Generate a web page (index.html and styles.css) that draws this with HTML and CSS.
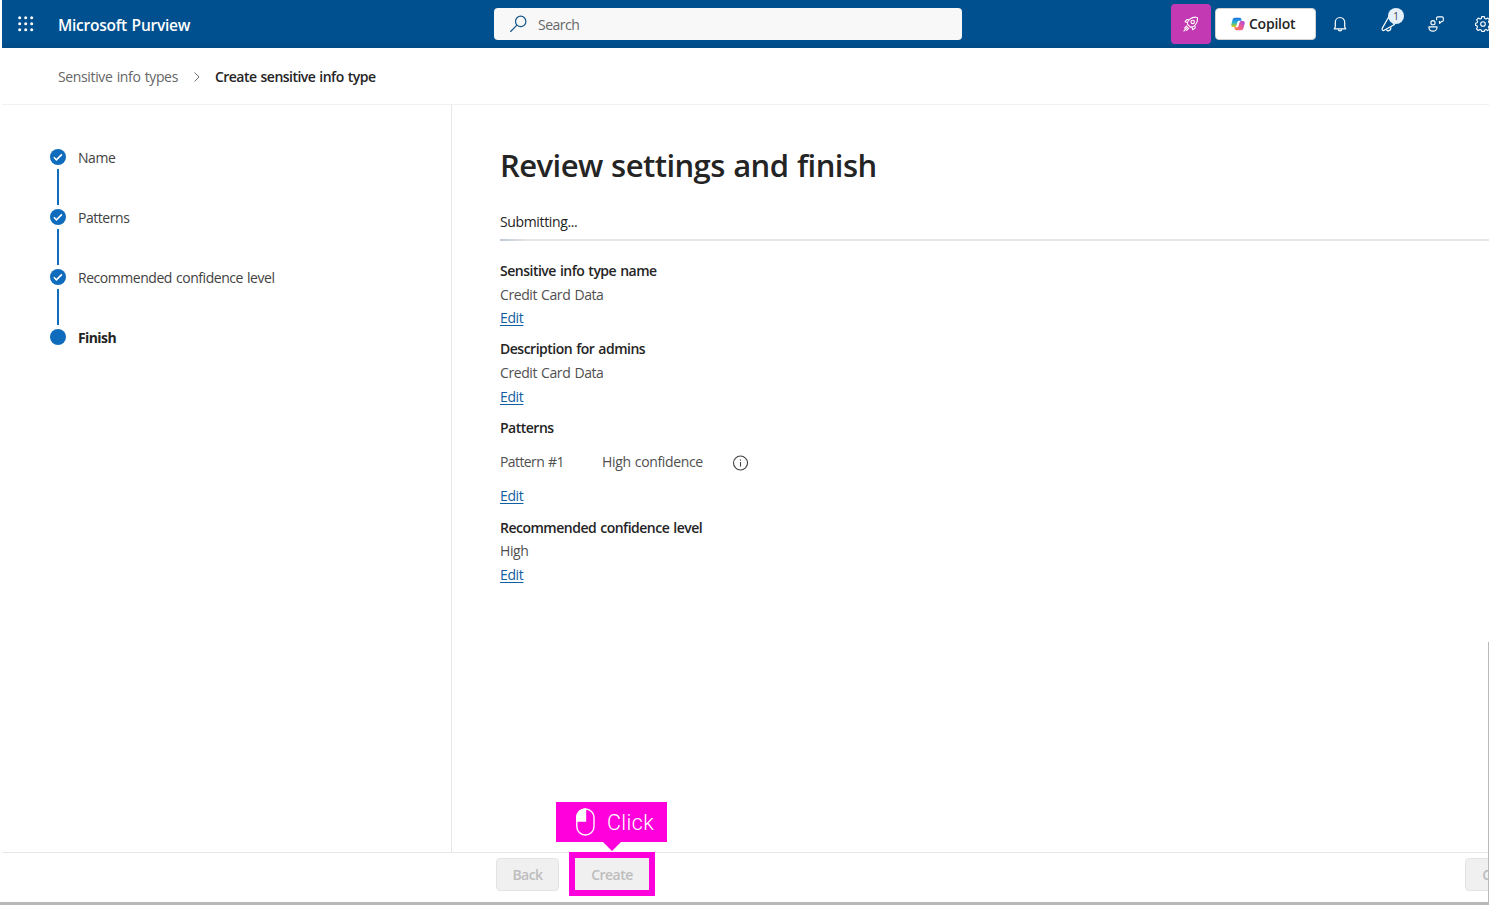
FILE: index.html
```html
<!DOCTYPE html>
<html lang="en">
<head>
<meta charset="utf-8">
<title>Create sensitive info type - Microsoft Purview</title>
<link rel="stylesheet" href="styles.css">
</head>
<body>
<div class="app">
  <header class="topbar">
    <svg class="waffle" width="16" height="16" viewBox="0 0 16 16" fill="#fff"><circle cx="1.700" cy="1.700" r="1.500"/><circle cx="7.700" cy="1.700" r="1.500"/><circle cx="13.700" cy="1.700" r="1.500"/><circle cx="1.700" cy="7.700" r="1.500"/><circle cx="7.700" cy="7.700" r="1.500"/><circle cx="13.700" cy="7.700" r="1.500"/><circle cx="1.700" cy="13.700" r="1.500"/><circle cx="7.700" cy="13.700" r="1.500"/><circle cx="13.700" cy="13.700" r="1.500"/></svg>
    <div class="brand"><span class="brand-text">Microsoft Purview</span></div>
    <div class="search">
      <svg width="18" height="18" viewBox="0 0 18 18" fill="none" stroke="#0f548c" stroke-width="1.200"><circle cx="10.700" cy="6.400" r="5.200"/><path d="M6.900 10.200.4 16.800"/></svg>
      <span class="search-text">Search</span>
    </div>
    <div class="tools">
      <div class="rocket">
        <svg width="16" height="16" viewBox="0 0 16 16" fill="none" stroke="#fff" stroke-width="1.100" stroke-linejoin="round" stroke-linecap="round"><path d="M4.400 8.200C4.200 4.500 8 .9 13.200 1.100c.8 0 1.300.5 1.300 1.300.2 5.100-3.300 8.900-7.100 8.700z"/><circle cx="9.700" cy="5.900" r="1.700"/><path d="M5.700 3.800 3.800 3.500 2 5.800l2.400.8M11.900 9.800l.3 2.100-2.500 1.800-.7-2.600M3.700 10 1.500 12.200M5.800 12.200l-2.200 2.200M4.700 11.200.9 15"/></svg>
      </div>
      <div class="copilot">
        <svg width="14" height="14" viewBox="0 0 14 14">
          <defs>
            <linearGradient id="cool" x1="0" y1="0" x2="0" y2="1"><stop offset="0" stop-color="#1b6fe0"/><stop offset=".5" stop-color="#27b3d6"/><stop offset=".8" stop-color="#8acb4e"/><stop offset="1" stop-color="#f2c811"/></linearGradient>
            <linearGradient id="warm" x1="1" y1="0" x2="0" y2="1"><stop offset="0" stop-color="#a04be8"/><stop offset=".5" stop-color="#ef5a94"/><stop offset="1" stop-color="#ff8a3c"/></linearGradient>
          </defs>
          <path d="M4 .8h4.600c1 0 1.500.7 1.800 1.600l.4 1.300H8.300c-.9 0-1.400.5-1.700 1.300L5.400 8.800C5.100 9.700 4.600 10 3.800 10H2C.6 10 0 8.900.3 7.600L1.600 2.700C1.900 1.500 2.700.8 4 .8z" fill="url(#cool)"/>
          <path d="M10 13.200H5.400c-1 0-1.500-.7-1.800-1.600l-.4-1.300h2.500c.9 0 1.400-.5 1.700-1.300l1.200-3.800c.3-.9.800-1.200 1.600-1.200H12c1.400 0 2 1.100 1.700 2.400l-1.300 4.900c-.3 1.200-1.100 1.900-2.400 1.900z" fill="url(#warm)"/>
          <path d="M6.800 4.800h1.600L7.200 9.200H5.600z" fill="#fff"/>
        </svg>
        <span class="copilot-text">Copilot</span>
      </div>
      <svg class="bell" width="14" height="16" viewBox="0 0 14 16" fill="none" stroke="#fff" stroke-width="1.200" stroke-linejoin="round"><path d="M2.300 11V6.200a4.700 4.700 0 0 1 9.400 0V11l1 1.800H1.300z"/><path d="M5.300 13.200a1.700 1.700 0 0 0 3.400 0"/></svg>
      <div class="news">
        <svg width="16" height="16" viewBox="0 0 16 16" fill="none" stroke="#fff" stroke-width="1.200" stroke-linejoin="round"><path d="M7.500 1.200 13.500 8.500 3.200 14.300c-1.300.7-2.600-.6-2-1.900z"/><path d="M5.400 13.400c.6 2.300 4.600 1.800 4.500-2.200"/></svg>
        <span class="badge">1</span>
      </div>
      <svg class="feedback" width="16" height="16" viewBox="0 0 16 16" fill="none" stroke="#fff" stroke-width="1.100" stroke-linejoin="round"><circle cx="5" cy="6.700" r="2.100"/><path d="M.9 10.900h8.200c0 5.600-8.200 5.600-8.200 0z"/><path d="M8.600 4.200V2.100C8.600 1.400 9.100.9 9.800.9h4.300c.7 0 1.200.5 1.200 1.200v2.200c0 .8-.5 1.200-1.200 1.200h-.5l-2 1.900V5.500h-.8"/></svg>
      <svg class="gear" width="16" height="16" viewBox="0 0 16 16" fill="none" stroke="#fff" stroke-width="1.100" stroke-linejoin="round"><path d="M6.700.6h2.600l.5 2 1.200.5 1.800-1 1.700 1.700-1 1.800.5 1.200 1.400.4v2.200l-1.500.5-.5 1.200 1 1.800-1.700 1.700-1.800-1-1.200.5-.4 1.300H6.700l-.5-1.400-1.200-.5-1.800 1-1.700-1.700 1-1.800-.5-1.200-1.400-.4V7.200L2.100 6.800l.5-1.200-1-1.800 1.700-1.700 1.800 1 1.200-.5z"/><circle cx="8" cy="8" r="2.300"/></svg>
    </div>
  </header>

  <nav class="crumbs">
    <span class="crumb-link">Sensitive info types</span>
    <svg width="8" height="12" viewBox="0 0 8 12" fill="none" stroke="#707070" stroke-width="1"><path d="M1.500 1.500 6 6l-4.500 4.500"/></svg>
    <span class="crumb-current">Create sensitive info type</span>
  </nav>

  <div class="main">
    <aside class="steps">
      <div class="step"><div class="rail"><span class="dot"><svg width="16" height="16" viewBox="0 0 16 16" fill="none" stroke="#fff" stroke-width="1.600"><path d="m3.900 8.300 2.500 2.500 5.500-5.400"/></svg></span><span class="line"></span></div><span class="label">Name</span></div>
      <div class="step"><div class="rail"><span class="dot"><svg width="16" height="16" viewBox="0 0 16 16" fill="none" stroke="#fff" stroke-width="1.600"><path d="m3.900 8.300 2.500 2.500 5.500-5.400"/></svg></span><span class="line"></span></div><span class="label">Patterns</span></div>
      <div class="step"><div class="rail"><span class="dot"><svg width="16" height="16" viewBox="0 0 16 16" fill="none" stroke="#fff" stroke-width="1.600"><path d="m3.900 8.300 2.500 2.500 5.500-5.400"/></svg></span><span class="line"></span></div><span class="label">Recommended confidence level</span></div>
      <div class="step"><div class="rail"><span class="dot"></span></div><span class="label current">Finish</span></div>
    </aside>

    <main class="content">
      <h1 class="title">Review settings and finish</h1>
      <div class="status">Submitting...</div>
      <div class="progress"></div>
      <section class="item"><h2 class="item-title">Sensitive info type name</h2><div class="value">Credit Card Data</div><a class="edit">Edit</a></section>
      <section class="item"><h2 class="item-title">Description for admins</h2><div class="value">Credit Card Data</div><a class="edit">Edit</a></section>
      <section class="item"><h2 class="item-title">Patterns</h2>
        <div class="pattern"><span class="pattern-id">Pattern #1</span><span class="confidence">High confidence</span>
          <svg class="info" width="16" height="16" viewBox="0 0 16 16" fill="none" stroke="#424242" stroke-width="1.100"><circle cx="8.500" cy="8" r="7"/><path d="M8.500 7v4.500M8.500 4.500v1.300"/></svg></div>
        <a class="edit">Edit</a></section>
      <section class="item"><h2 class="item-title">Recommended confidence level</h2><div class="value">High</div><a class="edit">Edit</a></section>
    </main>
  </div>

  <footer class="footer">
    <button class="btn back">Back</button>
    <div class="target">
      <button class="btn create">Create</button>
      <div class="callout">
        <svg width="20" height="28" viewBox="0 0 20 28" fill="none" stroke="#fff" stroke-width="1.400"><path d="M9.500 1C4.500 1 .8 4.500.8 9.500V13h8.700z" fill="#fff"/><rect x=".8" y="1" width="17.200" height="26" rx="8.600"/></svg>
        <span class="callout-text">Click</span>
      </div>
    </div>
    <button class="btn cancel">Cancel</button>
  </footer>
  <div class="edge"></div>
</div>
</body>
</html>
```
FILE: styles.css
```css
* { box-sizing: border-box; }
body {
  margin: 0;
  background: #fff;
  color: #242424;
  font: 14px/20px "Open Sans", "Noto Sans", sans-serif;
  letter-spacing: -0.42px;
  word-spacing: 0.9px;
  overflow: hidden;
}
svg { display: block; flex: none; }
.app {
  position: relative;
  display: flex;
  flex-direction: column;
  height: 905px;
  padding-left: 2px;
  border-bottom: 3px solid #b9b9b9;
  overflow: hidden;
  white-space: nowrap;
}
.edge { position: absolute; right: 0; top: 642px; bottom: 0; width: 1px; background: #b9b9b9; }

/* Top bar */
.topbar {
  display: flex;
  align-items: center;
  flex: none;
  height: 48px;
  padding-left: 16px;
  background: linear-gradient(#00508f 0, #00508f 42px, #004a85 48px);
}
.brand {
  flex: none;
  width: 436px;
  margin-left: 24px;
  padding-top: 1px;
  color: #fff;
  font-size: 15.5px;
  font-weight: 600;
  letter-spacing: -0.25px;
}
.search {
  display: flex;
  align-items: center;
  flex: none;
  gap: 10px;
  width: 468px;
  height: 32px;
  padding-left: 16px;
  border-radius: 4px;
  background: #f8f8f8;
  color: #666;
}
.search-text { padding-top: 1px; letter-spacing: -0.5px; }
.tools { display: flex; align-items: center; flex: none; margin-left: 209px; }
.rocket {
  display: flex;
  align-items: center;
  justify-content: center;
  width: 40px;
  height: 40px;
  border-radius: 4px;
  background: #c239b3;
}
.copilot {
  display: flex;
  align-items: center;
  gap: 4px;
  width: 101px;
  height: 32px;
  margin-left: 4px;
  padding-left: 15px;
  border: 1px solid #d1d1d1;
  border-radius: 4px;
  background: #fff;
  font-weight: 600;
  letter-spacing: -0.25px;
}
.bell { margin-left: 17px; }
.news { position: relative; margin-left: 34px; }
.badge {
  position: absolute;
  left: 7px;
  top: -8px;
  width: 16px;
  height: 16px;
  border-radius: 50%;
  background: #e6f0fb;
  color: #424242;
  font-size: 10px;
  line-height: 16px;
  letter-spacing: 0;
  text-align: center;
}
.feedback { margin-left: 31px; }
.gear { margin-left: 31px; }

/* Breadcrumb */
.crumbs {
  display: flex;
  align-items: center;
  flex: none;
  height: 57px;
  padding: 1px 0 0 56px;
  border-bottom: 1px solid #f0f0f0;
}
.crumbs svg { margin: 0 14px 0 15px; }
.crumb-link { color: #666; letter-spacing: -0.36px; }
.crumb-current { font-weight: 600; letter-spacing: -0.52px; }

/* Wizard */
.main { display: flex; flex: 1; min-height: 0; }
.steps { flex: none; width: 450px; padding: 42px 0 0 48px; border-right: 1px solid #e6e6e6; }
.step { display: flex; gap: 12px; height: 60px; }
.rail { display: flex; flex-direction: column; align-items: center; width: 16px; padding-top: 2px; }
.dot { width: 16px; height: 16px; border-radius: 50%; background: #0f6cbd; }
.line { width: 2px; height: 36px; margin-top: 4px; background: #0f6cbd; }
.label { padding-top: 1px; color: #424242; letter-spacing: -0.46px; }
.current { color: #242424; font-weight: 700; letter-spacing: -0.6px; }
.content { flex: 1; min-width: 0; padding: 40px 0 0 48px; }
.title { margin: 0; font-size: 31px; line-height: 40px; font-weight: 600; letter-spacing: -0.55px; }
.status { margin-top: 27px; letter-spacing: -0.36px; }
.progress { height: 2px; margin: 7px 0 18px; background: linear-gradient(90deg, #bfcad8 0, #e6e6e6 28px); }
.item { margin-bottom: 7.6px; line-height: 23.6px; }
.item-title { margin: 0; font-size: inherit; line-height: inherit; font-weight: 600; letter-spacing: -0.5px; }
.value { color: #505050; }
.edit { display: block; width: max-content; color: #115ea3; letter-spacing: -0.36px; text-decoration: underline; text-underline-offset: 2px; }
.pattern { display: flex; align-items: center; height: 45px; color: #505050; }
.pattern-id { width: 102px; letter-spacing: -0.6px; }
.confidence { width: 130px; letter-spacing: -0.35px; }
.info { margin-top: 3px; }

/* Footer */
.footer {
  display: flex;
  align-items: center;
  flex: none;
  height: 50px;
  padding: 0 0 6px 494px;
  border-top: 1px solid #e6e6e6;
}
.btn {
  flex: none;
  height: 33px;
  padding: 0;
  border: 1px solid #e3e3e3;
  border-radius: 4px;
  background: #f0f0f0;
  color: #bdbdbd;
  font: 600 14px "Open Sans", "Noto Sans", sans-serif;
  letter-spacing: -0.55px;
}
.back { width: 63px; }
.target { position: relative; flex: none; width: 86px; height: 44px; margin: -2px 0 0 10px; border: 6px solid #ff00dc; }
.create { display: block; width: 74px; height: 32px; padding-top: 1px; border: 0; border-radius: 0; }
.cancel { width: 76px; margin-left: 810px; }
.callout {
  position: absolute;
  left: -19px;
  top: -56px;
  display: flex;
  align-items: center;
  width: 111px;
  height: 40px;
  padding-left: 20px;
  gap: 11px;
  background: #ff00dc;
  color: #fff;
  font: 300 21.5px/40px Roboto, sans-serif;
  letter-spacing: 0.4px;
}
.callout-text { padding-top: 2px; }
.callout::after {
  content: "";
  position: absolute;
  left: 47px;
  top: 40px;
  border: 9px solid transparent;
  border-top-color: #ff00dc;
  border-bottom: 0;
}
```
